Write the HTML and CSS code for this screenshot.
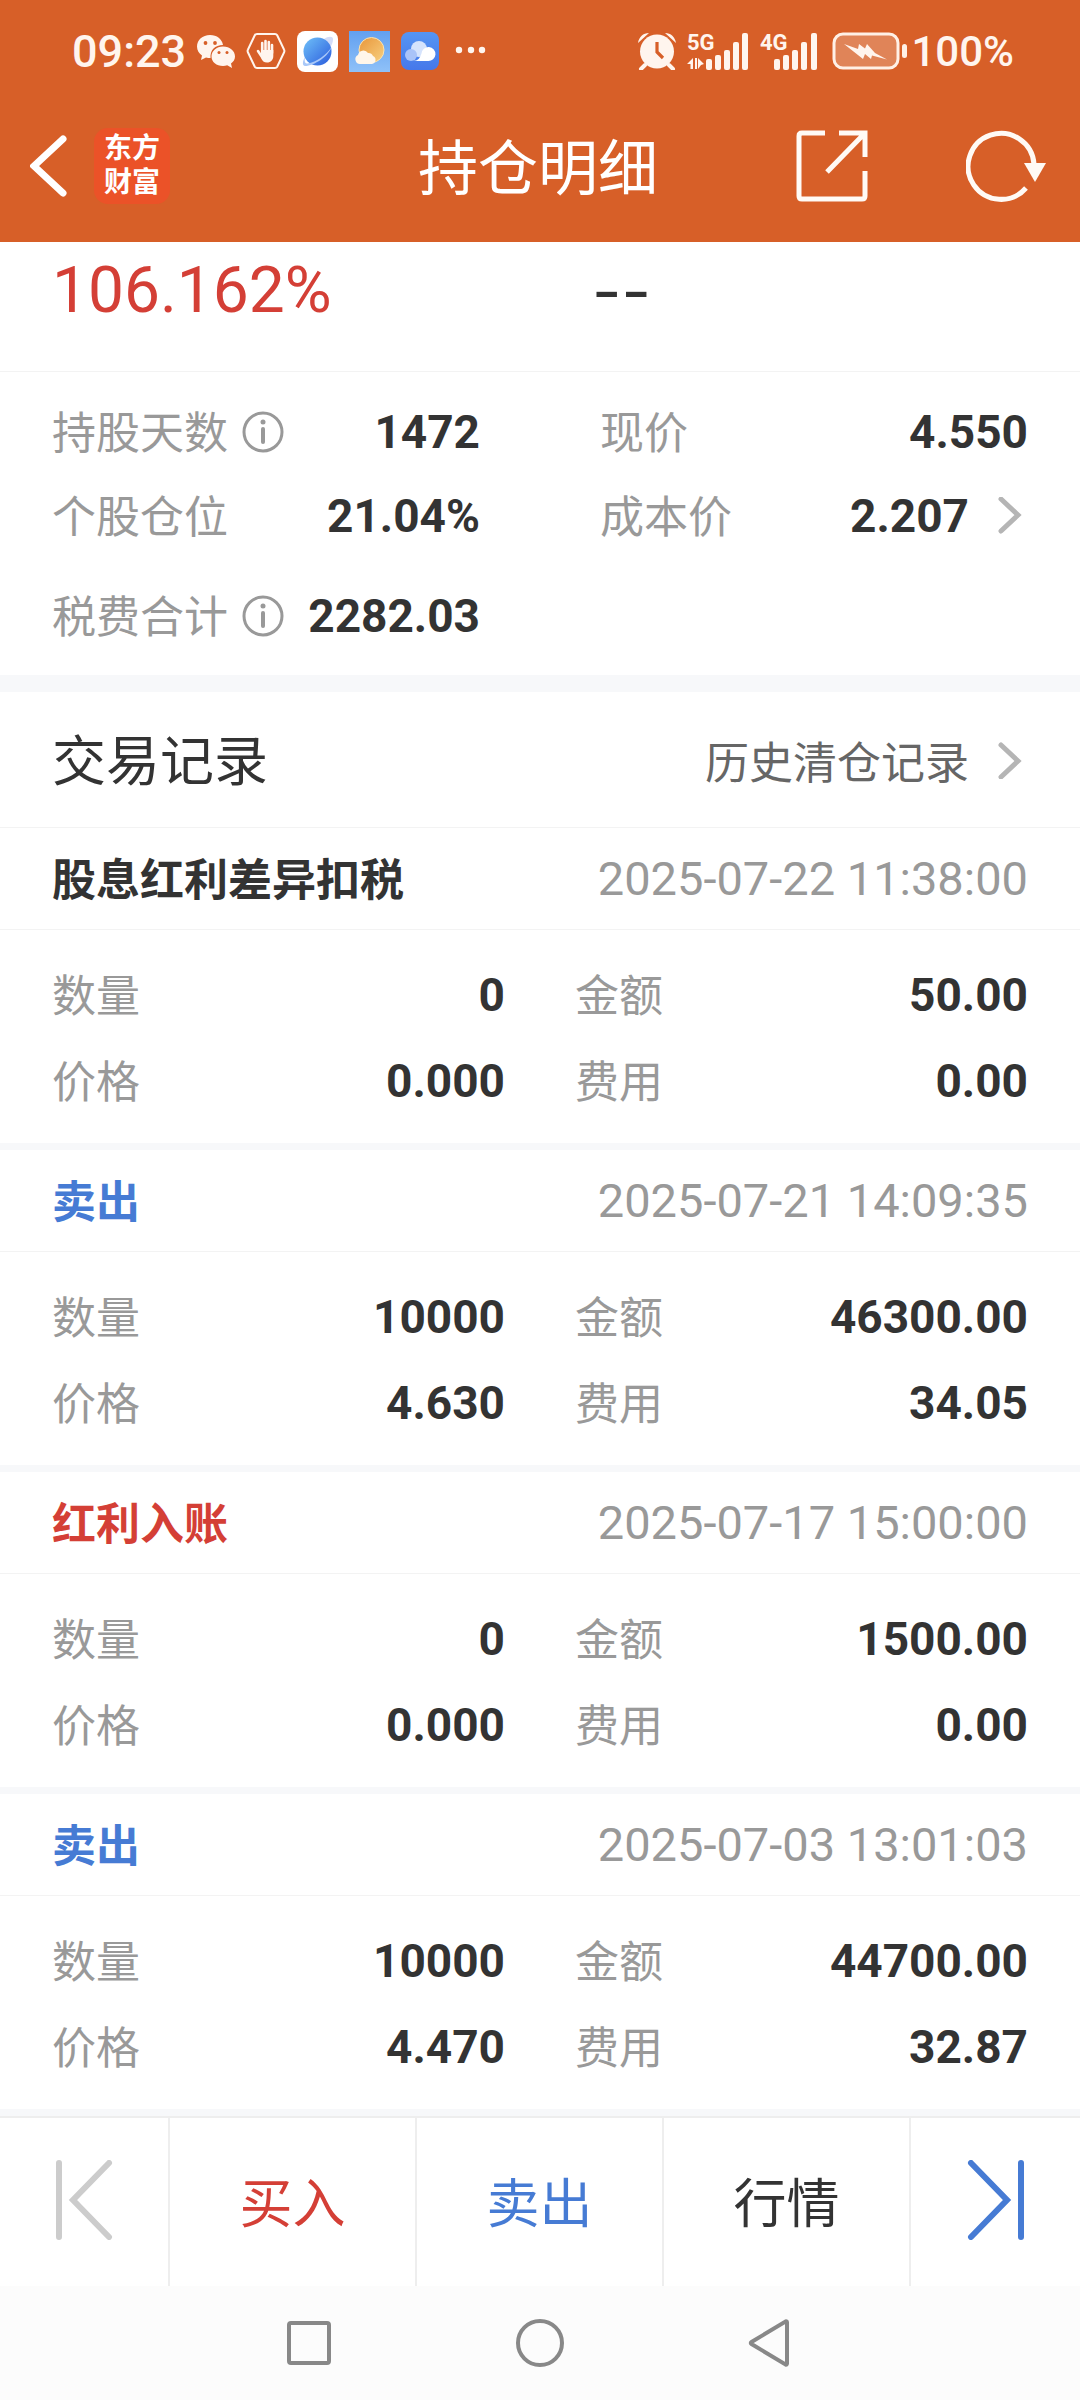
FILE: index.html
```html
<!DOCTYPE html>
<html lang="zh-CN">
<head>
  <meta charset="UTF-8" />
  <meta name="viewport" content="width=device-width, initial-scale=1.0" />
  <title>持仓明细</title>
  <link rel="stylesheet" href="styles.css">
</head>
<body>
  <header class="header">
    <div class="status-bar">
      <div class="status-group">
        <span class="status-text">09:23</span>
        <svg width="38" height="36" viewBox="0 0 38 36" fill="#fff5ee">
          <path d="M13 2C5.500 2 0 7 0 13.500c0 4 2 7 5 9L4 27l5-2.500c1.500.4 3 .5 4.500.5C13 17 18 12 26 12 25 6 20 2 13 2z"/>
          <path d="M26 13.500c-6.500 0-11.500 4.500-11.500 10S19.500 33 26 33c1.500 0 3-.2 4.200-.7L35 35l-1-4.500c2.500-1.700 4-4.200 4-7 0-5.500-5-10-12-10z"/>
          <g fill="#d75f28"><circle cx="8.500" cy="10" r="1.900"/><circle cx="18" cy="10" r="1.900"/><circle cx="22" cy="19.500" r="1.500"/><circle cx="30" cy="19.500" r="1.500"/></g>
        </svg>
        <svg width="40" height="38" viewBox="0 0 40 38">
          <path d="M11 2h18q1.500 0 2.200 1.300L38 17.500q.8 1.500 0 3L31.200 34.700Q30.500 36 29 36H11q-1.500 0-2.200-1.300L2 20.500q-.8-1.500 0-3L8.800 3.300Q9.500 2 11 2z" fill="none" stroke="#fff5ee" stroke-width="2"/>
          <g stroke="#fff5ee" stroke-width="2.600" stroke-linecap="round"><path d="M16.200 20v-9M19.500 19V9M22.800 19V10M26 21v-8M12 19l4 6"/></g>
          <path d="M15 18h12.300v6c0 4-2.600 6.500-6.300 6.500-3 0-4.600-1.500-6-4.500z" fill="#fff5ee"/>
        </svg>
        <svg width="41" height="41" viewBox="0 0 41 41">
          <defs>
            <linearGradient id="planet" x1="0" y1="0" x2="1" y2="1"><stop offset="0" stop-color="#6fc0f8"/><stop offset="1" stop-color="#2a5bdc"/></linearGradient>
          </defs>
          <rect width="41" height="41" rx="8" fill="#fff"/>
          <path d="M27 8c4-3 9-3 9 0s-1 6-4 10z" fill="#d3dcf8"/>
          <circle cx="20.500" cy="20.500" r="14" fill="url(#planet)"/>
          <path d="M8 26c-3 5-2.500 9 0 9 9 0 24-10 26.500-19-5 8-15 15-24 16.500-2 0-3.500-1-2.500-6.500z" fill="#a9c8f8"/>
        </svg>
        <svg width="41" height="41" viewBox="0 0 41 41">
          <defs>
            <linearGradient id="sky" x1="0" y1="0" x2="0" y2="1"><stop offset="0" stop-color="#62a0f0"/><stop offset="1" stop-color="#8fc1f8"/></linearGradient>
            <linearGradient id="sun" x1="0" y1="0" x2="1" y2="1"><stop offset="0" stop-color="#e8963a"/><stop offset="1" stop-color="#f8d080"/></linearGradient>
          </defs>
          <rect width="41" height="41" fill="url(#sky)"/>
          <circle cx="22.500" cy="19" r="12.500" fill="url(#sun)" stroke="#fbe3b0"/>
          <path d="M12 33a4.800 4.800 0 0 1-3-9 5.500 5.500 0 0 1 10-2 5 5 0 0 1 5 3 4.200 4.200 0 0 1-1 8z" fill="#fff6ea"/>
        </svg>
        <svg width="38" height="38" viewBox="0 0 38 38">
          <defs>
            <linearGradient id="cloudbg" x1="0" y1="0" x2="0" y2="1"><stop offset="0" stop-color="#5595f3"/><stop offset="1" stop-color="#4678ea"/></linearGradient>
          </defs>
          <rect width="38" height="38" rx="8" fill="url(#cloudbg)"/>
          <circle cx="18" cy="17" r="8" fill="#d5e3fc"/>
          <circle cx="10" cy="23" r="6" fill="#a9c3f8"/>
          <path d="M12 29c5 0 7-3 8.500-7.500a7 7 0 1 1 6.500 7.500z" fill="#fff"/>
        </svg>
        <svg width="50" height="40" viewBox="0 0 50 40" fill="#fff5ee"><circle cx="9" cy="19" r="3.200"/><circle cx="21" cy="19" r="3.200"/><circle cx="32" cy="19" r="3.200"/></svg>
      </div>
      <div class="status-group">
        <svg width="38" height="38" viewBox="0 0 38 38">
          <path d="M7 33l-4 4M31 33l4 4" stroke="#fff5ee" stroke-width="4" stroke-linecap="round"/>
          <circle cx="19" cy="19.500" r="17" fill="#fff5ee"/>
          <path d="M0 11C1 5 5 1 11 1zM38 11C37 5 33 1 27 1z" fill="#fff5ee"/>
          <path d="M19 10v10l6 6" fill="none" stroke="#d75f28" stroke-width="3.200"/>
        </svg>
        <svg class="signal" width="62" height="48" viewBox="0 0 62 48" fill="#fff5ee">
          <text x="0" y="23">5G</text>
          <path d="M0 37l6-6v11H3.500v-5zM8 31h2v11H8zM11 42V31l6 6-3 1z"/>
          <rect x="19" y="32" width="6" height="11" rx="2"/><rect x="28" y="28" width="6" height="15" rx="2"/><rect x="37" y="23" width="6" height="20" rx="2"/><rect x="46" y="15" width="6" height="28" rx="2"/><rect x="55" y="6" width="6" height="37" rx="2"/>
        </svg>
        <svg class="signal" width="58" height="48" viewBox="0 0 58 48" fill="#fff5ee">
          <text x="0" y="23">4G</text>
          <rect x="14" y="32" width="6" height="11" rx="2"/><rect x="23" y="28" width="6" height="15" rx="2"/><rect x="32" y="23" width="6" height="20" rx="2"/><rect x="41" y="15" width="6" height="28" rx="2"/><rect x="51" y="6" width="6" height="37" rx="2"/>
        </svg>
        <svg class="battery" width="76" height="38" viewBox="0 0 76 38">
          <rect x="2" y="2" width="64" height="34" rx="9" fill="#e08458" stroke="#fff0e6" stroke-width="3"/>
          <rect x="70" y="12" width="5" height="14" rx="2.500" fill="#fff0e6"/>
          <path d="M12 12l14 5 1-5 6 4.500 2-4.500 8 9 12 6.500-15-4-1 3.500-6-5-2 5z" fill="#fff5ee"/>
        </svg>
        <span class="battery-text">100%</span>
      </div>
    </div>

    <div class="title-bar">
      <div class="title-side">
        <button class="icon-btn" aria-label="返回">
          <svg width="38" height="62" viewBox="0 0 38 62"><path d="M33 4L4 31l29 27" fill="none" stroke="#fff" stroke-width="7" stroke-linecap="round"/></svg>
        </button>
        <div class="logo"><span>东方</span><span>财富</span></div>
      </div>
      <h1>持仓明细</h1>
      <div class="title-side title-actions">
        <button class="icon-btn" aria-label="分享">
          <svg width="72" height="72" viewBox="0 0 72 72" fill="none" stroke="#fffaf5" stroke-width="5">
            <path d="M29 3H6Q3 3 3 6v60q0 3 3 3h60q3 0 3-3V41M43 3h26v24M69 3L31 42"/>
          </svg>
        </button>
        <button class="icon-btn" aria-label="刷新">
          <svg width="80" height="72" viewBox="0 0 80 72">
            <path d="M60 58A33 33 0 1 1 68 34" fill="none" stroke="#fffaf5" stroke-width="5"/>
            <path d="M58 33h22L69 52z" fill="#fffaf5"/>
          </svg>
        </button>
      </div>
    </div>
  </header>

  <main>
    <section class="profit">
      <span class="profit-rate">106.162%</span>
      <span class="profit-empty">--</span>
    </section>

    <section class="summary">
      <div class="cell">
        <span class="label">持股天数</span>
        <button class="icon-btn" aria-label="持股天数说明"><svg width="42" height="42" viewBox="0 0 42 42"><circle cx="21" cy="21" r="19" fill="none" stroke="#999" stroke-width="3"/><circle cx="21" cy="11" r="2.500" fill="#999"/><path d="M21 18v13" stroke="#999" stroke-width="4" stroke-linecap="round"/></svg></button>
        <span class="value">1472</span>
      </div>
      <div class="cell">
        <span class="label">现价</span>
        <span class="value">4.550</span>
      </div>
      <div class="cell">
        <span class="label">个股仓位</span>
        <span class="value">21.04%</span>
      </div>
      <a class="cell" href="#cost">
        <span class="label">成本价</span>
        <span class="value">2.207</span>
        <svg class="chevron" width="24" height="38" viewBox="0 0 24 38"><path d="M3 2l17 16L3 34" /></svg>
      </a>
      <div class="cell cell-tax">
        <span class="label">税费合计</span>
        <button class="icon-btn" aria-label="税费合计说明"><svg width="42" height="42" viewBox="0 0 42 42"><circle cx="21" cy="21" r="19" fill="none" stroke="#999" stroke-width="3"/><circle cx="21" cy="11" r="2.500" fill="#999"/><path d="M21 18v13" stroke="#999" stroke-width="4" stroke-linecap="round"/></svg></button>
        <span class="value">2282.03</span>
      </div>
    </section>

    <section class="history">
      <div class="history-head">
        <h2>交易记录</h2>
        <a href="#history">历史清仓记录
          <svg class="chevron" width="24" height="38" viewBox="0 0 24 38"><path d="M3 4l17 16L3 36" /></svg>
        </a>
      </div>

      <article class="record">
        <div class="record-head"><h3>股息红利差异扣税</h3><time>2025-07-22 11:38:00</time></div>
        <dl class="record-body">
          <div class="cell"><dt class="label">数量</dt><dd class="value">0</dd></div>
          <div class="cell"><dt class="label">金额</dt><dd class="value">50.00</dd></div>
          <div class="cell"><dt class="label">价格</dt><dd class="value">0.000</dd></div>
          <div class="cell"><dt class="label">费用</dt><dd class="value">0.00</dd></div>
        </dl>
      </article>

      <article class="record">
        <div class="record-head"><h3 class="blue">卖出</h3><time>2025-07-21 14:09:35</time></div>
        <dl class="record-body">
          <div class="cell"><dt class="label">数量</dt><dd class="value">10000</dd></div>
          <div class="cell"><dt class="label">金额</dt><dd class="value">46300.00</dd></div>
          <div class="cell"><dt class="label">价格</dt><dd class="value">4.630</dd></div>
          <div class="cell"><dt class="label">费用</dt><dd class="value">34.05</dd></div>
        </dl>
      </article>

      <article class="record">
        <div class="record-head"><h3 class="red">红利入账</h3><time>2025-07-17 15:00:00</time></div>
        <dl class="record-body">
          <div class="cell"><dt class="label">数量</dt><dd class="value">0</dd></div>
          <div class="cell"><dt class="label">金额</dt><dd class="value">1500.00</dd></div>
          <div class="cell"><dt class="label">价格</dt><dd class="value">0.000</dd></div>
          <div class="cell"><dt class="label">费用</dt><dd class="value">0.00</dd></div>
        </dl>
      </article>

      <article class="record">
        <div class="record-head"><h3 class="blue">卖出</h3><time>2025-07-03 13:01:03</time></div>
        <dl class="record-body">
          <div class="cell"><dt class="label">数量</dt><dd class="value">10000</dd></div>
          <div class="cell"><dt class="label">金额</dt><dd class="value">44700.00</dd></div>
          <div class="cell"><dt class="label">价格</dt><dd class="value">4.470</dd></div>
          <div class="cell"><dt class="label">费用</dt><dd class="value">32.87</dd></div>
        </dl>
      </article>
    </section>
  </main>

  <footer>
    <div class="actions">
      <button aria-label="上一只" disabled>
        <svg width="58" height="80" viewBox="0 0 58 80" fill="none" stroke="#ccc" stroke-width="6" stroke-linecap="round"><path d="M4 3v74M54 3L18 40l36 37"/></svg>
      </button>
      <button class="red">买入</button>
      <button class="blue">卖出</button>
      <button>行情</button>
      <button aria-label="下一只">
        <svg width="58" height="80" viewBox="0 0 58 80" fill="none" stroke="#467bd4" stroke-width="6" stroke-linecap="round"><path d="M54 3v74M4 3l36 37L4 77"/></svg>
      </button>
    </div>
    <nav class="system-nav">
      <button class="icon-btn" aria-label="最近任务"><svg width="50" height="50" viewBox="0 0 50 50"><rect x="5" y="5" width="40" height="40" rx="2"/></svg></button>
      <button class="icon-btn" aria-label="主屏幕"><svg width="50" height="50" viewBox="0 0 50 50"><circle cx="25" cy="25" r="22"/></svg></button>
      <button class="icon-btn" aria-label="返回"><svg width="50" height="50" viewBox="0 0 50 50"><path d="M41 4.500v41q0 1.500-1.500 1L5.500 26q-1.500-1 0-2L39.500 3.500q1.500-.5 1.500 1z"/></svg></button>
    </nav>
  </footer>
</body>
</html>
```
FILE: styles.css
```css
* { box-sizing: border-box; margin: 0; padding: 0; }
body { font-family: Roboto, "Noto Sans CJK SC", sans-serif; background: #fff; color: #333; }
button { background: none; border: none; font: inherit; color: inherit; cursor: pointer; }
a { color: inherit; text-decoration: none; }
svg { display: block; flex: none; }
h1, h2, h3, .label, .actions button, .history-head a { font-family: "Noto Sans CJK SC", sans-serif; }
h1, h2, h3, .label { padding-bottom: 4px; }
.icon-btn { display: flex; flex: none; }
.red { color: #d43f36; }
.blue { color: #467bd4; }

/* header */
.header { background: #d75f28; color: #fff; }
.status-bar { display: flex; justify-content: space-between; padding: 12px 66px 0 72px; height: 90px; }
.status-group { display: flex; align-items: center; gap: 11px; }
.status-text { font-size: 45px; font-weight: 500; color: #fff5ee; }
.battery-text { font-size: 42px; font-weight: 500; color: #fff5ee; margin-left: -8px; }
.battery { margin-left: 3px; }
.signal text { font: 700 22px Roboto, sans-serif; }
.title-bar { display: grid; grid-template-columns: 1fr auto 1fr; align-items: center; height: 152px; padding: 0 34px 0 30px; }
.title-side { display: flex; align-items: center; gap: 26px; }
.title-actions { justify-content: flex-end; gap: 98px; }
.title-bar h1 { font-size: 60px; font-weight: 400; line-height: 72px; }
.logo { display: flex; flex-direction: column; justify-content: center; width: 76px; height: 76px; border-radius: 14px; background: #eb5228; font-size: 28px; font-weight: 700; line-height: 34px; text-align: center; }

/* position summary */
.profit { display: grid; grid-template-columns: 1fr 1fr; gap: 120px; padding: 10px 52px 41px; border-bottom: 1px solid #f3f3f3; font-size: 64px; line-height: 78px; }
.profit-rate { color: #d43f36; }
.profit-empty { font-family: Inter, sans-serif; margin-left: -8px; }
.summary { display: grid; grid-template-columns: 1fr 1fr; column-gap: 120px; padding: 18px 52px 17px; border-bottom: 17px solid #f7f8fa; }
.cell { display: flex; align-items: center; height: 84px; gap: 14px; }
.cell-tax { margin-top: 16px; }
.label { font-size: 44px; line-height: 60px; color: #999; }
.value { margin-left: auto; font-size: 46px; line-height: 60px; font-weight: 700; }
.chevron { fill: none; stroke: #b5b5b5; stroke-width: 5; stroke-linecap: round; }
a.cell, .history-head a { padding-right: 6px; }
a.cell { gap: 29px; }

/* trade records */
.history-head { display: flex; align-items: center; justify-content: space-between; height: 136px; padding: 0 52px; border-bottom: 1px solid #f3f3f3; }
.history-head h2 { font-size: 54px; font-weight: 400; line-height: 72px; }
.history-head a { display: flex; align-items: center; gap: 29px; font-size: 44px; line-height: 60px; color: #666; }
.record { border-bottom: 7px solid #f7f8fa; }
.record-head { display: flex; align-items: center; justify-content: space-between; height: 102px; padding: 0 52px; border-bottom: 1px solid #f3f3f3; }
.record-head h3 { font-size: 44px; font-weight: 700; line-height: 60px; }
.record-head time { font-size: 47px; line-height: 60px; color: #999; }
.record-body { display: grid; grid-template-columns: 1fr 1fr; column-gap: 70px; padding: 22px 52px 19px; }
.record-body .cell { height: 86px; }

/* bottom bars */
.actions { display: grid; grid-template-columns: 170fr 247fr 247fr 247fr 169fr; height: 170px; border-top: 2px solid #eee; }
.actions button { display: flex; align-items: center; justify-content: center; padding-bottom: 4px; font-size: 53px; line-height: 72px; border-right: 2px solid #eee; }
.actions button:last-child { border-right: none; }
.system-nav { display: flex; justify-content: center; align-items: center; gap: 181px; height: 114px; background: #fcfcfc; }
.system-nav svg { fill: none; stroke: #888; stroke-width: 4; }
```
